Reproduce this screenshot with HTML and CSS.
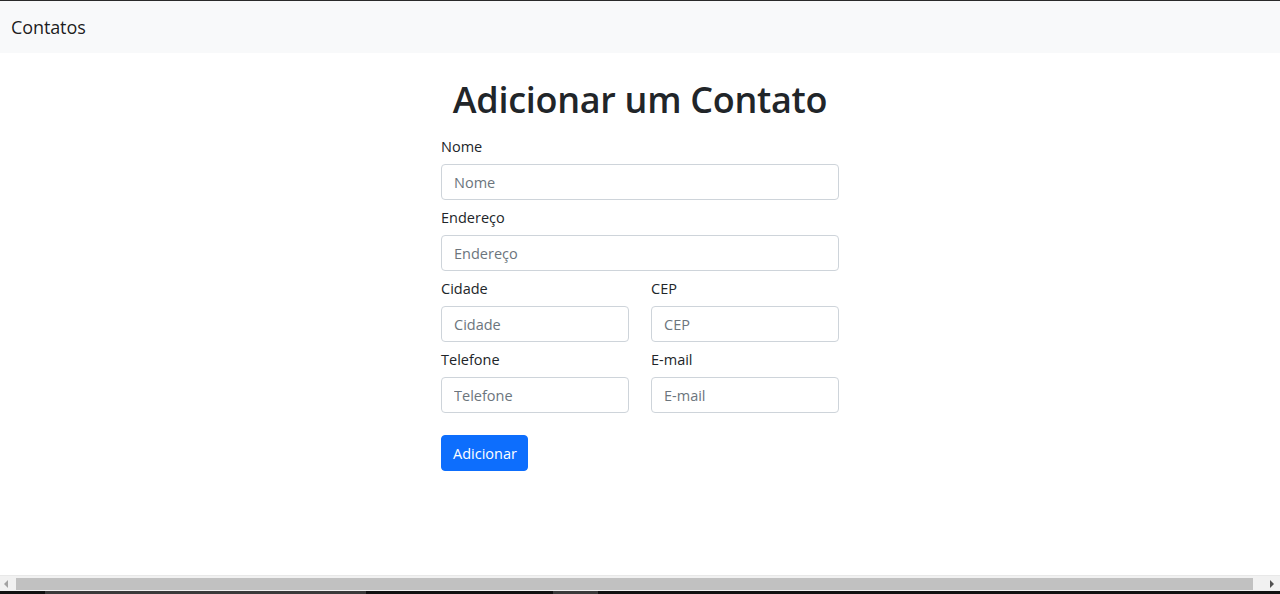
FILE: index.html
```html
<!DOCTYPE html>
<html lang="pt-BR">
<head>
<meta charset="utf-8">
<title>Contatos</title>
<link rel="stylesheet" href="styles.css">
</head>
<body>
<div class="topline"></div>
<nav class="navbar"><span class="brand">Contatos</span></nav>
<main class="main">
  <h1 class="title">Adicionar um Contato</h1>
  <form class="form">
    <div class="group">
      <label class="label">Nome</label>
      <input class="input" type="text" placeholder="Nome">
    </div>
    <div class="group">
      <label class="label">Endereço</label>
      <input class="input" type="text" placeholder="Endereço">
    </div>
    <div class="row">
      <div class="group">
        <label class="label">Cidade</label>
        <input class="input" type="text" placeholder="Cidade">
      </div>
      <div class="group">
        <label class="label">CEP</label>
        <input class="input" type="text" placeholder="CEP">
      </div>
    </div>
    <div class="row">
      <div class="group">
        <label class="label">Telefone</label>
        <input class="input" type="text" placeholder="Telefone">
      </div>
      <div class="group">
        <label class="label">E-mail</label>
        <input class="input" type="text" placeholder="E-mail">
      </div>
    </div>
    <div class="actions">
      <button class="btn" type="button">Adicionar</button>
    </div>
  </form>
</main>
<div class="hscroll">
  <span class="arrow arrow-left"></span>
  <span class="thumb"></span>
  <span class="arrow arrow-right"></span>
</div>
<div class="taskbar">
  <span class="tb-seg tb-seg1"></span>
  <span class="tb-gap1"></span>
  <span class="tb-seg tb-seg2"></span>
</div>
</body>
</html>
```
FILE: styles.css
```css
html, body {
  margin: 0;
  padding: 0;
}
body {
  height: 594px;
  width: 1280px;
  overflow: hidden;
  display: flex;
  flex-direction: column;
  background: #fff;
  color: #212529;
  font-family: "Open Sans", "Noto Sans", sans-serif;
}
.topline {
  height: 1px;
  background: #2a2a2a;
  flex: none;
}
.navbar {
  height: 52px;
  flex: none;
  background: #f8f9fa;
  display: flex;
  align-items: center;
  padding: 0 11px;
}
.brand {
  font-size: 18px;
  color: rgba(0, 0, 0, 0.9);
  letter-spacing: -0.1px;
}
.main {
  flex: 1;
  display: flex;
  flex-direction: column;
  align-items: center;
}
.title {
  margin: 25px 0 13px;
  font-size: 36px;
  line-height: 44px;
  font-weight: 600;
  letter-spacing: -0.3px;
  color: #212529;
}
.form {
  width: 398px;
  display: flex;
  flex-direction: column;
}
.group {
  display: flex;
  flex-direction: column;
  margin-bottom: 6px;
}
.row {
  display: grid;
  grid-template-columns: 188px 188px;
  column-gap: 22px;
}
.label {
  font-size: 14.5px;
  line-height: 22px;
  padding-top: 1px;
  margin-bottom: 6px;
  color: #212529;
}
.input {
  box-sizing: border-box;
  height: 36px;
  margin: 0;
  padding: 0 12px;
  border: 1px solid #ced4da;
  border-radius: 4px;
  font-family: inherit;
  font-size: 14.5px;
  color: #212529;
  background: #fff;
  outline: none;
}
.input::placeholder {
  color: #6c757d;
  opacity: 1;
}
.actions {
  padding-top: 16px;
  display: flex;
}
.btn {
  box-sizing: border-box;
  height: 36px;
  width: 87px;
  padding: 0 0 0 1px;
  border: 1px solid #0d6efd;
  border-radius: 4px;
  background: #0d6efd;
  color: #fff;
  font-family: inherit;
  font-size: 14.5px;
}
.hscroll {
  flex: none;
  height: 15px;
  background: #f1f1f1;
  display: flex;
  align-items: center;
  border-top: 1px solid #e8e8e8;
}
.arrow {
  width: 0;
  height: 0;
  border-top: 4px solid transparent;
  border-bottom: 4px solid transparent;
  flex: none;
}
.arrow-left {
  border-right: 4px solid #a3a3a3;
  margin: 0 8px 0 4px;
}
.arrow-right {
  border-left: 4px solid #505050;
  margin: 0 6px 0 17px;
}
.thumb {
  flex: 1;
  height: 12px;
  background: #c1c1c1;
}
.taskbar {
  flex: none;
  height: 3px;
  background: #111;
  display: flex;
}
.tb-seg {
  height: 3px;
  background: #3a3a3a;
}
.tb-seg1 {
  margin-left: 45px;
  width: 321px;
}
.tb-gap1 {
  width: 187px;
}
.tb-seg2 {
  width: 45px;
}
```
